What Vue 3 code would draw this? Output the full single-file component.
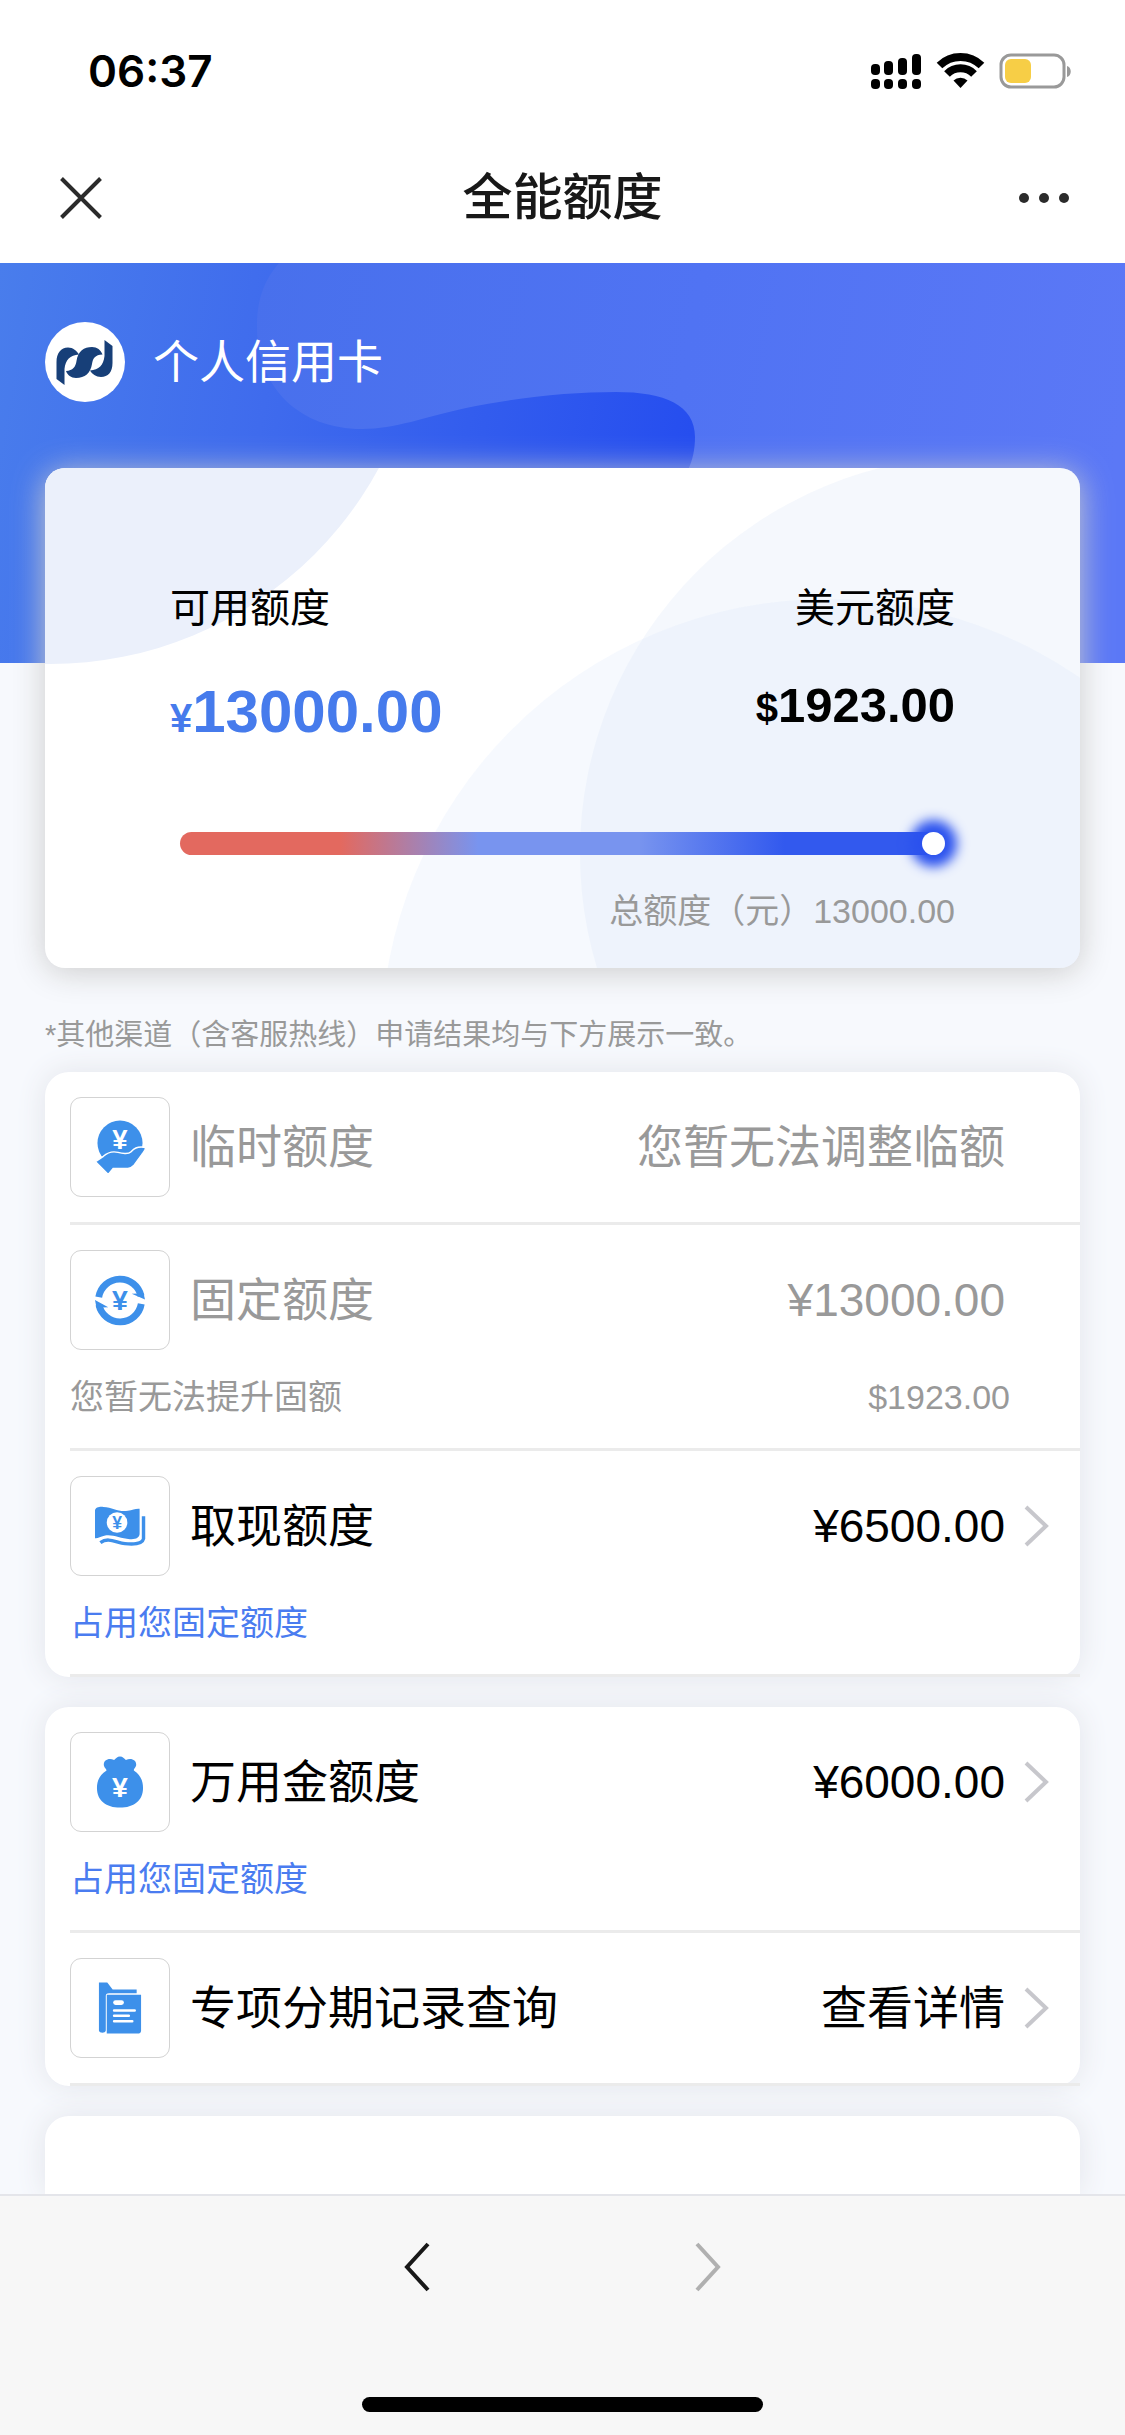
<script setup>
import { ref } from 'vue'

const used = ref(13000)

const groups = [
  [
    { icon: 'hand', label: '临时额度', value: '您暂无法调整临额', muted: true },
    { icon: 'cycle', label: '固定额度', value: '¥13000.00', muted: true, note: '您暂无法提升固额', noteValue: '$1923.00' },
    { icon: 'cash', label: '取现额度', value: '¥6500.00', href: '#cash', note: '占用您固定额度' }
  ],
  [
    { icon: 'bag', label: '万用金额度', value: '¥6000.00', href: '#fund', note: '占用您固定额度' },
    { icon: 'folder', label: '专项分期记录查询', value: '查看详情', href: '#records' }
  ]
]
</script>

<template>
  <div class="page">
    <div class="status">
      <span class="time">06:37</span>
      <svg class="status-icons" width="202" height="38" viewBox="0 0 202 38" aria-hidden="true">
        <g>
          <rect x="1" y="12" width="9" height="11" rx="4" />
          <rect x="14" y="9" width="9" height="14" rx="4" />
          <rect x="28" y="6" width="9" height="17" rx="4" />
          <rect x="42" y="2" width="9" height="21" rx="4" />
          <rect x="1" y="27" width="9" height="10" rx="4" />
          <rect x="14" y="27" width="9" height="10" rx="4" />
          <rect x="28" y="27" width="9" height="10" rx="4" />
          <rect x="42" y="27" width="9" height="10" rx="4" />
        </g>
        <g fill="none" stroke="#000" stroke-width="8">
          <path d="M69.500 13.500A30 30 0 0 1 111.500 13.500" />
          <path d="M77 22A19 19 0 0 1 104 22" />
        </g>
        <path d="M90.500 36L83.500 28.500A10 10 0 0 1 97.500 28.500Z" />
        <rect x="131" y="3" width="63" height="32" rx="10" fill="none" stroke="#999" stroke-width="3" />
        <rect x="135" y="7" width="26" height="24" rx="6" fill="#f7ce46" />
        <path d="M197 14C202 15 202 24 197 25Z" fill="#999" />
      </svg>
    </div>

    <header class="nav">
      <button class="nav-btn" type="button" aria-label="关闭">
        <svg width="42" height="42" viewBox="0 0 42 42"><path d="M1.500 1.500L40.500 40.500M40.500 1.500L1.500 40.500" fill="none" stroke="#2b2b2b" stroke-width="4" /></svg>
      </button>
      <h1>全能额度</h1>
      <button class="nav-btn" type="button" aria-label="更多">
        <svg width="52" height="42" viewBox="0 0 52 42" fill="#2b2b2b"><circle cx="6" cy="21" r="5" /><circle cx="26" cy="21" r="5" /><circle cx="46" cy="21" r="5" /></svg>
      </button>
    </header>

    <main class="content">
      <svg class="backdrop" viewBox="0 0 1125 400" preserveAspectRatio="none" aria-hidden="true">
        <defs>
          <linearGradient id="base" x1="0" y1="0" x2="700" y2="120" gradientUnits="userSpaceOnUse">
            <stop offset="0" stop-color="#497dec" />
            <stop offset="0.400" stop-color="#3f6bed" />
            <stop offset="1" stop-color="#264eef" />
          </linearGradient>
          <linearGradient id="wave" x1="257" y1="0" x2="1125" y2="150" gradientUnits="userSpaceOnUse">
            <stop offset="0" stop-color="#4870ec" />
            <stop offset="0.500" stop-color="#5073f3" />
            <stop offset="1" stop-color="#5b78f6" />
          </linearGradient>
        </defs>
        <rect width="1125" height="400" fill="url(#base)" />
        <path d="M279 0C262 20 257 40 257 64C257 125 300 166 362 166C395 166 425 154 466 145C520 134 570 129 616 129C665 129 695 142 695 174C695 200 685 215 670 235V400H1125V0Z" fill="url(#wave)" />
      </svg>

      <div class="owner">
        <svg width="80" height="80" viewBox="0 0 80 80" aria-hidden="true">
          <circle cx="40" cy="40" r="40" fill="#fff" />
          <g fill="#173f78">
            <path d="M11.500 57V40C11.500 31 16 25.500 23 25.500C28 25.500 32 29 34 32.500C25 33 20.500 38 19.500 47V63Z" />
            <path d="M67.500 24V41C67.500 50 63 55 56 55C51 55 47 52 45 48.500C54 48 58.500 43 59.500 34V18Z" />
            <path d="M21 49C28 48.500 30.500 45 31.500 39C33 29 39 25 47 25C52 25 56 28 57.500 32.500C50 33 48 36 47 42C45.500 51 40 56 31 56C26 56 22.500 53 21 49Z" />
          </g>
        </svg>
        <span>个人信用卡</span>
      </div>

      <section class="summary">
        <svg class="summary-art" viewBox="0 0 1035 500" preserveAspectRatio="xMaxYMid slice" aria-hidden="true">
          <circle cx="5" cy="-178" r="374" fill="#ebf0fb" />
          <circle cx="932" cy="385" r="397" fill="#d8e4f8" fill-opacity="0.250" />
          <circle cx="782" cy="577" r="446" fill="#d8e4fa" fill-opacity="0.220" />
        </svg>
        <div class="amounts">
          <div>
            <div class="amount-label">可用额度</div>
            <div class="amount main"><span class="unit">¥</span>13000.00</div>
          </div>
          <div class="usd">
            <div class="amount-label">美元额度</div>
            <div class="amount side"><span class="unit">$</span>1923.00</div>
          </div>
        </div>
        <input v-model="used" class="gauge" type="range" min="0" max="13000" aria-label="可用额度" />
        <div class="total">总额度（元）13000.00</div>
      </section>

      <p class="hint">*其他渠道（含客服热线）申请结果均与下方展示一致。</p>

      <section v-for="(rows, g) in groups" :key="g" class="group">
        <component
          :is="row.href ? 'a' : 'div'"
          v-for="row in rows"
          :key="row.label"
          :href="row.href"
          class="row"
          :class="{ muted: row.muted }"
        >
          <div class="row-main">
            <span class="icon">
              <svg viewBox="0 0 100 100" fill="#3d90ea" aria-hidden="true">
                <template v-if="row.icon === 'hand'">
                  <circle cx="50" cy="46" r="23" />
                  <text x="50" y="52" class="yen light" font-size="28">¥</text>
                  <path d="M25 65L33 59.500C38 55 42 54 48 55.500C53 57 59 57 61 55C64 52 67 49 76 50.500C76.500 53 74 55 72 58L64 69C62 71 61 72 58 72H43L38 78Z" stroke="#fff" stroke-width="1.500" />
                </template>
                <template v-else-if="row.icon === 'cycle'">
                  <path d="M28.300 47A22 22 0 0 1 71.500 46M71.700 54A22 22 0 0 1 28.500 55" fill="none" stroke="#3d90ea" stroke-width="7" />
                  <path d="M62 43.500L75.500 49.500L74 43ZM38 57.500L24.500 50L26 58Z" />
                  <text x="50" y="60" class="yen" font-size="29">¥</text>
                </template>
                <template v-else-if="row.icon === 'cash'">
                  <path d="M24.500 34C25 31 29 30 33 30.500C43 31 48 36 58 34.500C63 34 66 32 70 32.500V58C70 62 66 64 60 63.500C50 63 42 58 34 60C30 61 27 63 24.500 62.500Z" />
                  <path d="M30 67C38 61 46 67 55 68C64 69 73 68 74 63V40" fill="none" stroke="#3d90ea" stroke-width="3.500" />
                  <circle cx="47" cy="46.500" r="10.500" fill="#fff" />
                  <text x="47" y="53" class="yen" font-size="18">¥</text>
                </template>
                <template v-else-if="row.icon === 'bag'">
                  <path d="M50 24C53 24 54 26 56 27.500C62 25 67 28 66.500 33C66 36 63 37 64.500 38.500C71 43 73.500 49 73.500 56C73.500 69 64 76 50 76C36 76 26.500 69 26.500 56C26.500 49 29 43 36 38.500C37 37 34 36 33.500 33C33 28 38 25 44 27.500C46 26 47 24 50 24Z" />
                  <text x="50" y="65" class="yen light" font-size="29">¥</text>
                </template>
                <template v-else>
                  <path d="M28.500 24H37L42.500 31H67V35H39C36 35 35.500 36 35.500 38V73C35 76 29 76 28.500 73Z" />
                  <path d="M36.500 36.500H71.500V73C71.500 75 70.500 76 68.500 76H36.500Z" />
                  <g stroke="#fff" stroke-linecap="round" fill="none">
                    <path d="M45.500 44.500H51.500" stroke-width="5" />
                    <path d="M44 52.500H65M44 58H59M44 63.500H62.500" stroke-width="2.600" />
                  </g>
                </template>
              </svg>
            </span>
            <span class="label">{{ row.label }}</span>
            <span class="value">{{ row.value }}</span>
            <span class="arrow">
              <svg v-if="row.href" width="26" height="42" viewBox="0 0 26 42" aria-hidden="true"><path d="M2 2L22 21L2 40" fill="none" stroke="#c7c7cc" stroke-width="4" /></svg>
            </span>
          </div>
          <div v-if="row.note" class="row-note">
            <span>{{ row.note }}</span>
            <span v-if="row.noteValue">{{ row.noteValue }}</span>
          </div>
        </component>
      </section>

      <section class="group rest"></section>
    </main>

    <footer class="toolbar">
      <div class="toolbar-buttons">
        <button type="button" aria-label="后退">
          <svg width="26" height="50" viewBox="0 0 26 50"><path d="M24 2L3 25L24 48" fill="none" stroke="#181818" stroke-width="4" /></svg>
        </button>
        <button type="button" aria-label="前进" disabled>
          <svg width="26" height="50" viewBox="0 0 26 50"><path d="M2 2L23 25L2 48" fill="none" stroke="#b0b0b0" stroke-width="4" /></svg>
        </button>
      </div>
      <div class="home"></div>
    </footer>
  </div>
</template>

<style>
body {
  background: #f7f9fd;
}
</style>

<style scoped>
.page {
  display: flex;
  flex-direction: column;
  min-height: 100vh;
  font-family: "Liberation Sans", "Noto Sans CJK SC", sans-serif;
  color: #000;
}

button {
  display: flex;
  padding: 0;
  border: 0;
  background: none;
}

.status {
  display: flex;
  align-items: center;
  justify-content: space-between;
  height: 142px;
  padding: 0 53px 0 88px;
  background: #fff;
}

.time {
  font-family: Inter, sans-serif;
  font-size: 44px;
  font-weight: 600;
}

.nav {
  display: flex;
  align-items: center;
  justify-content: space-between;
  height: 111px;
  padding: 0 55px 10px;
  background: #fff;
}

.nav-btn {
  justify-content: center;
  width: 52px;
}

h1 {
  margin: 0;
  font-size: 50px;
  font-weight: 500;
  line-height: 70px;
  color: #181818;
}

.content {
  position: relative;
  display: flex;
  flex: 1;
  flex-direction: column;
  padding: 59px 45px 0;
  overflow: hidden;
}

.backdrop {
  position: absolute;
  top: 0;
  left: 0;
  width: 100%;
  height: 400px;
}

.owner {
  position: relative;
  display: flex;
  align-items: center;
  gap: 28px;
  height: 80px;
  margin-bottom: 66px;
  color: #fff;
  font-size: 46px;
  line-height: 60px;
}

.summary {
  position: relative;
  padding: 110px 125px 32px;
  border-radius: 20px;
  background: #fff;
  box-shadow: 0 4px 32px #cccccc;
}

.summary-art {
  position: absolute;
  inset: 0;
  width: 100%;
  height: 100%;
  border-radius: 20px;
}

.amounts {
  position: relative;
  display: flex;
  justify-content: space-between;
}

.usd {
  text-align: right;
}

.amount-label {
  margin-bottom: 34px;
  font-size: 40px;
  line-height: 60px;
}

.amount {
  font-weight: 700;
}

.main {
  color: #467bec;
  font-size: 60px;
  line-height: 80px;
}

.side {
  font-size: 49px;
  line-height: 66px;
}

.unit {
  font-size: 40px;
  line-height: 40px;
}

.gauge {
  position: relative;
  display: block;
  width: calc(100% - 20px);
  height: 23px;
  margin: 80px 10px 31px;
  border-radius: 12px;
  background: linear-gradient(90deg, #e3695f 21%, #7894ef 39%, #7894ef 60%, #3259ee 79%);
  appearance: none;
}

.gauge::-webkit-slider-thumb {
  width: 23px;
  height: 23px;
  border-radius: 50%;
  background: #fff;
  box-shadow: 0 0 12px 12px #2b52ee;
  appearance: none;
}

.total {
  position: relative;
  color: #999;
  font-size: 34px;
  line-height: 50px;
  text-align: right;
}

.hint {
  position: relative;
  margin: 45px 0 15px;
  color: #999;
  font-size: 29px;
  line-height: 44px;
}

.group {
  margin-bottom: 30px;
  padding-left: 25px;
  border-radius: 24px;
  background: #fff;
  box-shadow: 0 0 30px #e2e4ea;
}

.rest {
  flex: 1;
  min-height: 78px;
  margin-bottom: 0;
  border-radius: 24px 24px 0 0;
}

.row {
  display: block;
  padding-top: 25px;
  border-bottom: 3px solid #ebebeb;
  color: #000;
  text-decoration: none;
}

.row-main {
  display: flex;
  align-items: center;
  padding: 0 30px 25px 0;
  font-size: 46px;
  line-height: 60px;
}

.icon {
  box-sizing: border-box;
  width: 100px;
  height: 100px;
  margin-right: 20px;
  border: 1px solid #d3d3d3;
  border-radius: 11px;
}

.icon svg {
  display: block;
}

.yen {
  font-weight: 700;
  text-anchor: middle;
}

.light {
  fill: #fff;
}

.value {
  margin-left: auto;
}

.arrow {
  display: flex;
  width: 26px;
  margin-left: 19px;
}

.row-note {
  display: flex;
  justify-content: space-between;
  padding: 0 70px 29px 0;
  color: #4a7cf0;
  font-size: 34px;
  line-height: 44px;
}

.muted,
.muted .row-note {
  color: #999;
}

.toolbar {
  display: flex;
  flex-direction: column;
  align-items: center;
  justify-content: space-between;
  box-sizing: border-box;
  height: 241px;
  padding: 46px 0 23px;
  border-top: 2px solid #e4e5ea;
  background: #f7f7f7;
}

.toolbar-buttons {
  display: flex;
  gap: 265px;
}

.home {
  width: 401px;
  height: 15px;
  border-radius: 8px;
  background: #000;
}
</style>
